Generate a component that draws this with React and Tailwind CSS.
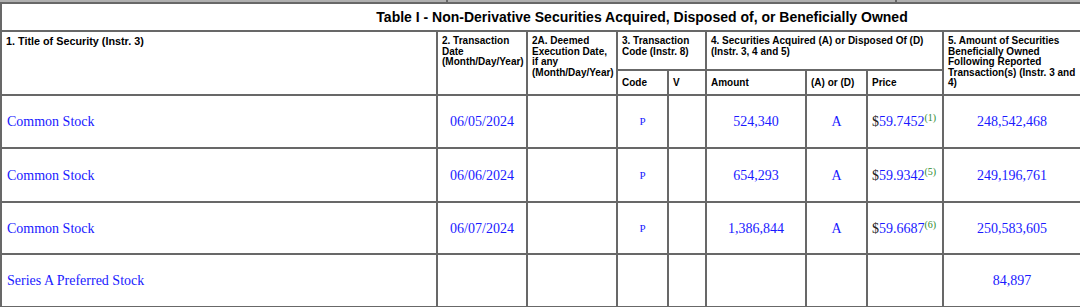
import React from "react";

const rows = [
  { title: "Common Stock", date: "06/05/2024", code: "P", amount: "524,340", ad: "A", price: "59.7452", fn: "(1)", owned: "248,542,468", h: "h-[53px]" },
  { title: "Common Stock", date: "06/06/2024", code: "P", amount: "654,293", ad: "A", price: "59.9342", fn: "(5)", owned: "249,196,761", h: "h-[54px]" },
  { title: "Common Stock", date: "06/07/2024", code: "P", amount: "1,386,844", ad: "A", price: "59.6687", fn: "(6)", owned: "250,583,605", h: "h-[52px]" },
  { title: "Series A Preferred Stock", date: "", code: "", amount: "", ad: "", price: "", fn: "", owned: "84,897", h: "h-[53px]" },
];

const sans = "font-['Liberation_Sans',Arial,sans-serif]";
const serif = "font-['Liberation_Serif','Times_New_Roman',serif]";
const cell = "border-2 border-[#686868]";
const hd = `${cell} ${sans} font-bold text-[10px] leading-[10.6px] text-black align-top text-left px-[4px] pt-[4px]`;
const hd2 = `${cell} ${sans} font-bold text-[10px] leading-[11px] text-black align-middle text-left px-[4px]`;
const data = `${cell} ${serif} text-[14px] text-[#1a1aff] align-middle`;

export default function App() {
  return (
    <div className="w-[1080px] h-[307px] overflow-hidden bg-white">
      <div className="flex h-[2px] bg-[#b0b0b0]">
        <div className="w-[448px] border-r-2 border-[#686868]" />
        <div className="w-[449px] border-r-2 border-[#686868]" />
        <div className="flex-1" />
      </div>
      <table className="table-fixed border-collapse w-[1282px]">
        <colgroup>
          <col className="w-[436px]" />
          <col className="w-[90px]" />
          <col className="w-[90px]" />
          <col className="w-[51px]" />
          <col className="w-[38px]" />
          <col className="w-[100px]" />
          <col className="w-[61px]" />
          <col className="w-[76px]" />
          <col className="w-[138px]" />
          <col className="w-[99px]" />
          <col className="w-[103px]" />
        </colgroup>
        <tbody>
          <tr className="h-[28px]">
            <th colSpan={11} className={`${cell} ${sans} font-bold text-[14px] text-black text-center align-middle`}>
              Table I - Non-Derivative Securities Acquired, Disposed of, or Beneficially Owned
            </th>
          </tr>
          <tr className="h-[39px]">
            <th rowSpan={2} className={`${cell} ${sans} font-bold text-[10.8px] leading-[10.6px] text-black align-top text-left px-[4px] pt-[4px]`}>1. Title of Security (Instr. 3)</th>
            <th rowSpan={2} className={hd}>2. Transaction Date (Month/Day/Year)</th>
            <th rowSpan={2} className={hd}>2A. Deemed Execution Date, if any (Month/Day/Year)</th>
            <th colSpan={2} className={hd}>3. Transaction Code (Instr. 8)</th>
            <th colSpan={3} className={hd}>4. Securities Acquired (A) or Disposed Of (D) (Instr. 3, 4 and 5)</th>
            <th rowSpan={2} className={hd}>5. Amount of Securities Beneficially Owned Following Reported Transaction(s) (Instr. 3 and 4)</th>
            <th rowSpan={2} className={hd}>6. Ownership Form: Direct (D) or Indirect (I) (Instr. 4)</th>
            <th rowSpan={2} className={hd}>7. Nature of Indirect Beneficial Ownership (Instr. 4)</th>
          </tr>
          <tr className="h-[25px]">
            <th className={hd2}>Code</th>
            <th className={hd2}>V</th>
            <th className={hd2}>Amount</th>
            <th className={hd2}>(A) or (D)</th>
            <th className={hd2}>Price</th>
          </tr>
          {rows.map((r, i) => (
            <tr key={i} className={r.h}>
              <td className={`${data} text-left px-[5px]`}>{r.title}</td>
              <td className={`${data} text-center`}>{r.date}</td>
              <td className={`${data} text-center`}></td>
              <td className={`${cell} ${serif} text-[11px] text-[#1a1aff] text-center align-middle`}>{r.code}</td>
              <td className={`${data} text-center`}></td>
              <td className={`${data} text-center`}>{r.amount}</td>
              <td className={`${data} text-center`}>{r.ad}</td>
              <td className={`${data} text-left px-[4px] whitespace-nowrap`}>
                {r.price && (
                  <>
                    <span className="text-[#222]">$</span>
                    {r.price}
                    <sup className="text-[10px] text-[#2e8b2e] relative -top-[5px]">{r.fn}</sup>
                  </>
                )}
              </td>
              <td className={`${data} text-center`}>{r.owned}</td>
              <td className={`${data} text-center`}>{r.owned ? "D" : ""}</td>
              <td className={`${data} text-center`}></td>
            </tr>
          ))}
        </tbody>
      </table>
    </div>
  );
}
